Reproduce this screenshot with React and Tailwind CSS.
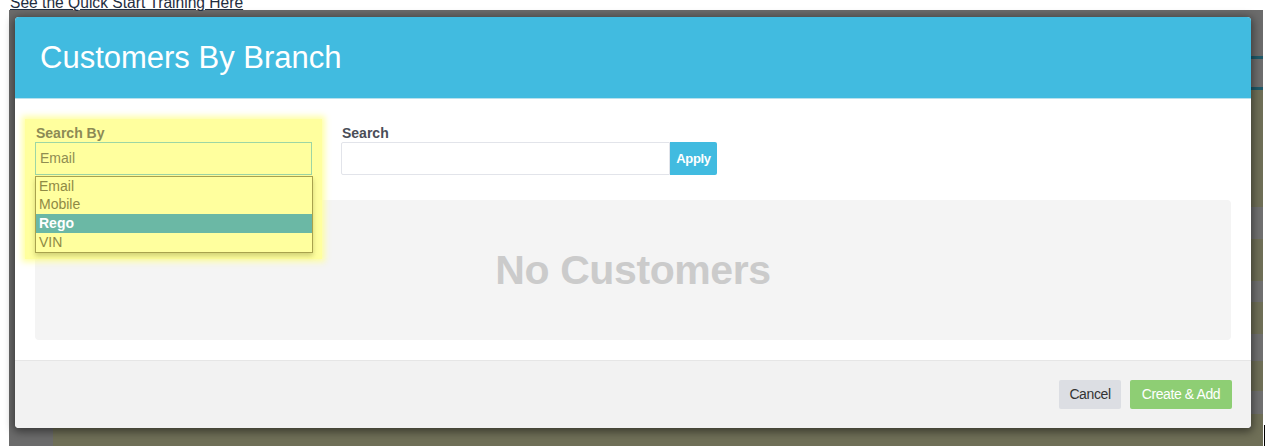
import React from "react";

const items = ["Email", "Mobile", "Rego", "VIN"];

export default function App() {
  return (
    <div className="w-[1277px] h-[446px] bg-white overflow-hidden" style={{ fontFamily: '"Liberation Sans", Arial, sans-serif' }}>
      <div className="relative z-30 flex h-[10px] pl-[10px] overflow-visible">
        <span className="block -mt-[5px] text-[15.6px] leading-none text-[#1f2d40] underline underline-offset-[1px] whitespace-nowrap">
          See the Quick Start Training Here
        </span>
      </div>
      <div className="relative ml-[9px] w-[1254px] h-[436px] bg-[#6b6b6b] pt-[7px] pl-[6px]">
        {/* page content behind the overlay */}
        <div className="absolute right-0 top-0 w-[12px] h-full flex flex-col">
          <div className="h-[46px] bg-[#6b6b6b]" />
          <div className="h-[3px] bg-[#1f5a6a]" />
          <div className="h-[28px] bg-[#6d6d6d]" />
          <div className="h-[3px] bg-[#1f5a6a]" />
          <div className="h-[117px] bg-[#6f6f57]" />
          <div className="h-[32px] bg-[#707070]" />
          <div className="h-[42px] bg-[#6f6f57]" />
          <div className="h-[21px] bg-[#707070]" />
          <div className="h-[32px] bg-[#6f6f57]" />
          <div className="h-[27px] bg-[#707070]" />
          <div className="h-[30px] bg-[#6f6f57]" />
          <div className="h-[23px] bg-[#707070]" />
          <div className="flex-1 bg-[#6f6f57]" />
        </div>
        <div className="absolute left-[44px] right-0 bottom-0 h-[18px] bg-[#6f6f57]" />
        <div className="absolute left-[1255px] bottom-0 h-[21px] w-[1px] bg-black" />

        {/* modal */}
        <div className="relative w-[1236px] h-[411px] rounded-[4px] bg-white shadow-[0_2px_8px_2px_rgba(0,0,0,0.45)] flex flex-col overflow-visible">
          <div className="h-[82px] shrink-0 bg-[#41bbe0] rounded-t-[4px] border-b border-[#b8e1ee] flex items-center pl-[25px]">
            <h1 className="text-[31px] leading-none text-white -mt-[1px]">Customers By Branch</h1>
          </div>

          <div className="flex-1 px-[20px] pt-[26px] pb-[20px] flex flex-col gap-[25px]">
            <div className="flex gap-[29px] h-[50px]">
              {/* Search By */}
              <div className="relative z-10 w-[277px] flex flex-col">
                <div className="absolute -left-[10px] -top-[6px] w-[297px] h-[140px] bg-[#ffff9e] shadow-[0_0_6px_3px_rgba(255,255,150,0.85)]" />
                <label className="relative block text-[14px] font-bold text-[#8c8a55] leading-[17px] pl-[1px]">Search By</label>
                <div className="relative h-[33px] border border-[#9dd6a4] bg-[#ffff9e] flex items-center pl-[4px] text-[14px] text-[#8f8d52]">
                  Email
                </div>
                <div className="absolute left-0 top-[51px] w-[278px] border border-[#a8a24e] bg-[#ffff9e] shadow-[0_3px_5px_rgba(120,120,40,0.35)] flex flex-col pb-[1px]">
                  {items.map((it) =>
                    it === "Rego" ? (
                      <div key={it} className="h-[19px] my-[0.5px] bg-[#6bb8a5] text-white font-bold text-[14px] leading-[19px] pl-[3px]">
                        {it}
                      </div>
                    ) : (
                      <div key={it} className="h-[18px] text-[#8f8a45] text-[14px] leading-[18px] pl-[3px]">
                        {it}
                      </div>
                    )
                  )}
                </div>
              </div>

              {/* Search */}
              <div className="flex flex-col">
                <label className="block text-[14px] font-bold text-[#4a4d57] leading-[17px] pl-[1px]">Search</label>
                <div className="flex h-[33px]">
                  <div className="w-[329px] h-full border border-[#e2e4ea] rounded-l-[2px] bg-white" />
                  <button className="w-[47px] h-full bg-[#41bbe0] rounded-r-[2px] text-white text-[13px] font-bold tracking-[-0.3px]">
                    Apply
                  </button>
                </div>
              </div>
            </div>

            <div className="h-[140px] rounded-[4px] bg-[#f4f4f4] flex items-center justify-center">
              <span className="text-[41px] font-bold text-[#cbcbcb] tracking-[-0.4px] leading-none">No Customers</span>
            </div>
          </div>

          <div className="h-[68px] shrink-0 border-t border-[#e6e6e6] bg-[#f2f2f2] rounded-b-[4px] flex items-start justify-end gap-[9px] pt-[19px] pr-[19px]">
            <button className="h-[29px] w-[62px] rounded-[2px] bg-[#dcdee3] text-[#333] text-[14px] tracking-[-0.4px]">Cancel</button>
            <button className="h-[29px] w-[102px] rounded-[2px] bg-[#8ece74] text-white text-[14px] tracking-[-0.4px]">Create &amp; Add</button>
          </div>
        </div>
      </div>
    </div>
  );
}
